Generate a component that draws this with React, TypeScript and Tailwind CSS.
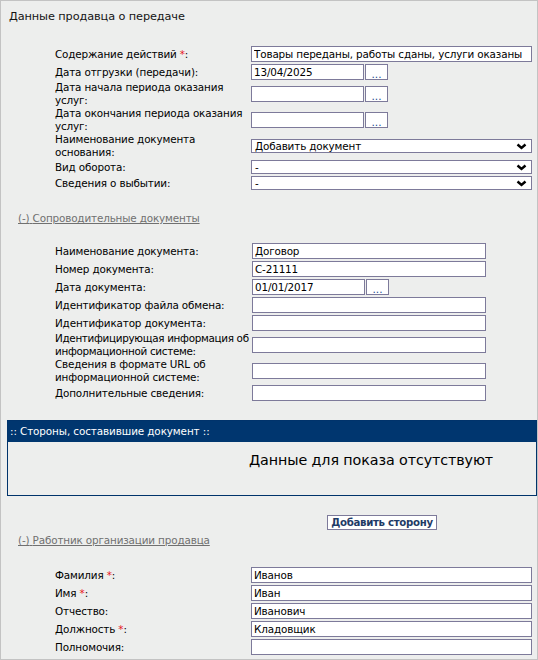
import type { ReactNode } from 'react'

const font = { fontFamily: '"DejaVu Sans", Verdana, sans-serif' }

const Req = () => <span className="text-[#e8141b]"> *</span>

interface RowProps {
  label: ReactNode
  children: ReactNode
  labelW?: string
  tight?: boolean
}

const Row = ({ label, children, labelW = 'w-[196px]', tight }: RowProps) => (
  <div className="flex items-center min-h-[18px]">
    <div
      className={`${labelW} ${tight ? 'tracking-[-0.32px]' : 'tracking-[-0.15px]'} shrink-0 text-[10.4px] leading-[13px] text-black`}
    >
      {label}
    </div>
    {children}
  </div>
)

const TextBox = ({ value = '', width }: { value?: string; width: string }) => (
  <input
    readOnly
    defaultValue={value}
    className={`${width} h-[16px] border border-[#7d7a9a] bg-white px-[2px] text-[10.4px] tracking-[-0.15px] leading-[14px] text-black outline-none`}
    style={font}
  />
)

const DateBox = ({ value = '' }: { value?: string }) => (
  <div className="flex h-[16px]">
    <TextBox value={value} width="w-[113px]" />
    <button className="ml-[1px] w-[23px] h-[16px] border border-[#7d7a9a] bg-white text-[10.5px] leading-[14px] text-[#1c4a91] pt-[2px]">
      ...
    </button>
  </div>
)

const Select = ({ value }: { value: string }) => (
  <div className="relative w-[281px] h-[14px] border border-[#7d7a9a] bg-white">
    <div className="px-[3px] text-[10.4px] tracking-[-0.15px] leading-[12px] text-black">{value}</div>
    <svg className="absolute right-[4px] top-[3px]" width="11" height="7" viewBox="0 0 11 7">
      <polyline points="1.5,1.5 5.5,5 9.5,1.5" fill="none" stroke="#000" strokeWidth="2.4" />
    </svg>
  </div>
)

const SelectRow = ({ label, value }: { label: ReactNode; value: string }) => (
  <div className="flex items-center min-h-[16px]">
    <div className="w-[196px] shrink-0 text-[10.4px] tracking-[-0.15px] leading-[13px] text-black">{label}</div>
    <Select value={value} />
  </div>
)

const ToggleLink = ({ children }: { children: ReactNode }) => (
  <div className="pl-[17px] text-[10.4px] tracking-[-0.15px] leading-[13px] text-[#707070]">
    <span className="underline">(-)</span>
    <span className="underline"> {children}</span>
  </div>
)

export default function App() {
  return (
    <div
      className="w-[538px] h-[660px] overflow-hidden border border-[#c3c3c3] bg-[#edeeed] text-black"
      style={font}
    >
      <div className="pl-[8px] pt-[8px] text-[11.3px] tracking-[-0.1px] leading-[15px] text-[#141414]">
        Данные продавца о передаче
      </div>

      {/* Main fields */}
      <div className="pl-[54px] mt-[21px] flex flex-col">
        <Row label={<>Содержание действий<Req />:</>}>
          <TextBox value="Товары переданы, работы сданы, услуги оказаны" width="w-[281px]" />
        </Row>
        <Row label="Дата отгрузки (передачи):">
          <DateBox value="13/04/2025" />
        </Row>
        <Row label="Дата начала периода оказания услуг:">
          <DateBox />
        </Row>
        <Row label="Дата окончания периода оказания услуг:">
          <DateBox />
        </Row>
        <SelectRow label="Наименование документа основания:" value="Добавить документ" />
        <SelectRow label="Вид оборота:" value="-" />
        <SelectRow label="Сведения о выбытии:" value="-" />
      </div>

      <div className="mt-[21px]">
        <ToggleLink>Сопроводительные документы</ToggleLink>
      </div>

      {/* Accompanying documents */}
      <div className="pl-[54px] mt-[17px] flex flex-col">
        <Row labelW="w-[197px]" label="Наименование документа:">
          <TextBox value="Договор" width="w-[234px]" />
        </Row>
        <Row labelW="w-[197px]" label="Номер документа:">
          <TextBox value="С-21111" width="w-[234px]" />
        </Row>
        <Row labelW="w-[197px]" label="Дата документа:">
          <DateBox value="01/01/2017" />
        </Row>
        <Row labelW="w-[197px]" label="Идентификатор файла обмена:">
          <TextBox width="w-[234px]" />
        </Row>
        <Row labelW="w-[197px]" label="Идентификатор документа:">
          <TextBox width="w-[234px]" />
        </Row>
        <Row labelW="w-[197px]" tight label="Идентифицирующая информация об информационной системе:">
          <TextBox width="w-[234px]" />
        </Row>
        <Row labelW="w-[197px]" label="Сведения в формате URL об информационной системе:">
          <TextBox width="w-[234px]" />
        </Row>
        <Row labelW="w-[197px]" label="Дополнительные сведения:">
          <TextBox width="w-[234px]" />
        </Row>
      </div>

      {/* Parties panel */}
      <div className="ml-[6px] mt-[18px] h-[76px] border border-[#00336b]">
        <div className="h-[21px] bg-[#00366f] pl-[2px] text-[10.4px] tracking-[-0.1px] leading-[21px] text-white">
          :: Стороны, составившие документ ::
        </div>
        <div className="pl-[241px] pt-[8px] text-[14.3px] tracking-[-0.1px] leading-[20px] text-black">
          Данные для показа отсутствуют
        </div>
      </div>

      <div className="mt-[19px] pl-[326px] flex">
        <button className="h-[15px] w-[110px] border border-[#7d7a9a] bg-white text-[10.2px] tracking-[-0.3px] leading-[12px] font-bold text-[#1f3b66]">
          Добавить сторону
        </button>
      </div>

      <div className="mt-[4px]">
        <ToggleLink>Работник организации продавца</ToggleLink>
      </div>

      {/* Seller employee */}
      <div className="pl-[54px] mt-[19px] flex flex-col">
        <Row label={<>Фамилия<Req />:</>}>
          <TextBox value="Иванов" width="w-[281px]" />
        </Row>
        <Row label={<>Имя<Req />:</>}>
          <TextBox value="Иван" width="w-[281px]" />
        </Row>
        <Row label="Отчество:">
          <TextBox value="Иванович" width="w-[281px]" />
        </Row>
        <Row label={<>Должность<Req />:</>}>
          <TextBox value="Кладовщик" width="w-[281px]" />
        </Row>
        <Row label="Полномочия:">
          <TextBox width="w-[281px]" />
        </Row>
      </div>
    </div>
  )
}
